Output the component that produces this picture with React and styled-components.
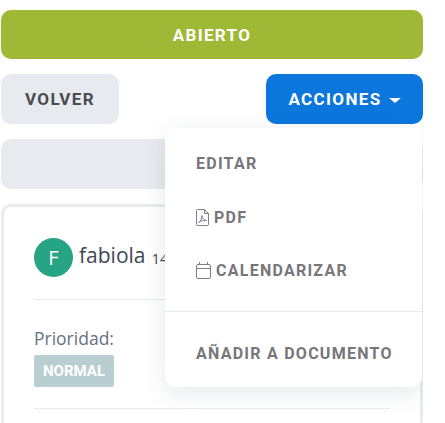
import React from "react";
import styled, { createGlobalStyle } from "styled-components";

const GlobalStyle = createGlobalStyle`
  html, body {
    margin: 0;
    padding: 0;
    height: 100%;
    overflow: hidden;
    background: #fff;
    font-family: "Open Sans", "Liberation Sans", sans-serif;
  }
`;

const Page = styled.div`
  width: 422px;
  height: 413px;
  overflow: hidden;
  margin-left: 1px;
  padding-top: 10px;
  display: flex;
  flex-direction: column;
  gap: 15px;
`;

const Button = styled.button`
  flex-shrink: 0;
  height: ${props => props.$height || "50px"};
  border: none;
  border-radius: 10px;
  padding: 0;
  font-family: "Roboto", "Liberation Sans", sans-serif;
  font-size: 17px;
  font-weight: 700;
  letter-spacing: 1.35px;
  color: ${props => props.$color || "#fff"};
  background-color: ${props => props.$bg};
  width: ${props => props.$width || "100%"};
`;

const Row = styled.div`
  flex-shrink: 0;
  display: flex;
  justify-content: space-between;
`;

const Caret = styled.span`
  display: inline-block;
  margin-left: 7px;
  vertical-align: 2px;
  border-top: 5px solid #fff;
  border-left: 6px solid transparent;
  border-right: 6px solid transparent;
`;

const Actions = styled.div`
  position: relative;
`;

const Menu = styled.div`
  position: absolute;
  z-index: 2;
  top: 54px;
  right: 1px;
  width: 257px;
  height: 259px;
  box-sizing: border-box;
  padding-top: 9px;
  background: #fff;
  border-radius: 10px;
  box-shadow: 0 6px 24px rgba(60, 70, 90, 0.12);
`;

const MenuItem = styled.div`
  height: 53.5px;
  padding-left: 31px;
  display: flex;
  align-items: center;
  gap: 5px;
  font-family: "Roboto", "Liberation Sans", sans-serif;
  font-size: 16px;
  font-weight: 700;
  letter-spacing: 1.25px;
  color: #77767a;
  white-space: nowrap;
`;

const Divider = styled.div`
  margin-top: 13px;
  height: 1px;
  background: #e9ecef;
`;

const LastItem = styled(MenuItem)`
  margin-top: 15px;
`;

const Placeholder = styled.div`
  flex-shrink: 0;
  height: 50px;
  border-radius: 10px;
  background: #e7eaef;
`;

const Card = styled.div`
  flex-shrink: 0;
  height: 300px;
  box-sizing: border-box;
  padding: 31px 30px 0;
  border: 3px solid #e9ecef;
  border-radius: 10px;
`;

const UserRow = styled.div`
  display: flex;
  align-items: center;
  gap: 6px;
  height: 39px;
  white-space: nowrap;
  color: #3d4757;
`;

const Avatar = styled.div`
  width: 39px;
  height: 39px;
  flex-shrink: 0;
  border-radius: 50%;
  background: #26a483;
  color: #fff;
  display: flex;
  align-items: center;
  justify-content: center;
  font-size: 20px;
`;

const UserName = styled.span`
  font-size: 21px;
  line-height: 34px;
  margin-bottom: 6px;
`;

const UserDate = styled.span`
  font-size: 15px;
`;

const Rule = styled.hr`
  margin: ${props => props.$margin};
  border: none;
  border-top: 1px solid #e9ecef;
`;

const Label = styled.div`
  font-size: 17.5px;
  line-height: 24px;
  color: #67707f;
`;

const Badge = styled.span`
  display: flex;
  align-items: center;
  justify-content: center;
  margin-top: 5px;
  width: 80px;
  height: 32px;
  border-radius: 2px;
  background: #b9ced1;
  color: #fff;
  font-family: "Roboto", "Liberation Sans", sans-serif;
  font-size: 15px;
  font-weight: 700;
`;

const PdfIcon = () => (
  <svg width="13" height="17" viewBox="0 0 13 17" fill="none" stroke="#77808c" strokeWidth="1">
    <path d="M.5 1.500a1 1 0 0 1 1-1h7l4 4v11a1 1 0 0 1-1 1h-10a1 1 0 0 1-1-1z" />
    <path d="M8.500.5v4h4" />
    <path d="M2.500 13.500c2-1 3.500-4 3.500-7 0 3 2 4.500 4.500 5-3-.5-5.500.5-8 2z" />
  </svg>
);

const CalendarIcon = () => (
  <svg width="15" height="17" viewBox="0 0 15 17" fill="none" stroke="#77808c" strokeWidth="1">
    <rect x="0.5" y="2.500" width="14" height="14" rx="1.500" />
    <path d="M.5 6.500h14M3.500 0v3M11.500 0v3" />
  </svg>
);

export default function App() {
  return (
    <>
      <GlobalStyle />
      <Page>
        <Button $bg="#9fb835" $height="49px">ABIERTO</Button>
        <Row>
          <Button $bg="#e7eaef" $color="#4a4a4f" $width="118px">VOLVER</Button>
          <Actions>
            <Button $bg="#0b76dc" $width="157px">
              ACCIONES<Caret />
            </Button>
            <Menu>
              <MenuItem>EDITAR</MenuItem>
              <MenuItem><PdfIcon />PDF</MenuItem>
              <MenuItem><CalendarIcon />CALENDARIZAR</MenuItem>
              <Divider />
              <LastItem>AÑADIR A DOCUMENTO</LastItem>
            </Menu>
          </Actions>
        </Row>
        <Placeholder />
        <Card>
          <UserRow>
            <Avatar>F</Avatar>
            <UserName>fabiola</UserName>
            <UserDate>14/03/2023</UserDate>
          </UserRow>
          <Rule $margin="22px 0 26px" />
          <Label>Prioridad:</Label>
          <Badge>NORMAL</Badge>
          <Rule $margin="21px 0 0" />
        </Card>
      </Page>
    </>
  );
}
